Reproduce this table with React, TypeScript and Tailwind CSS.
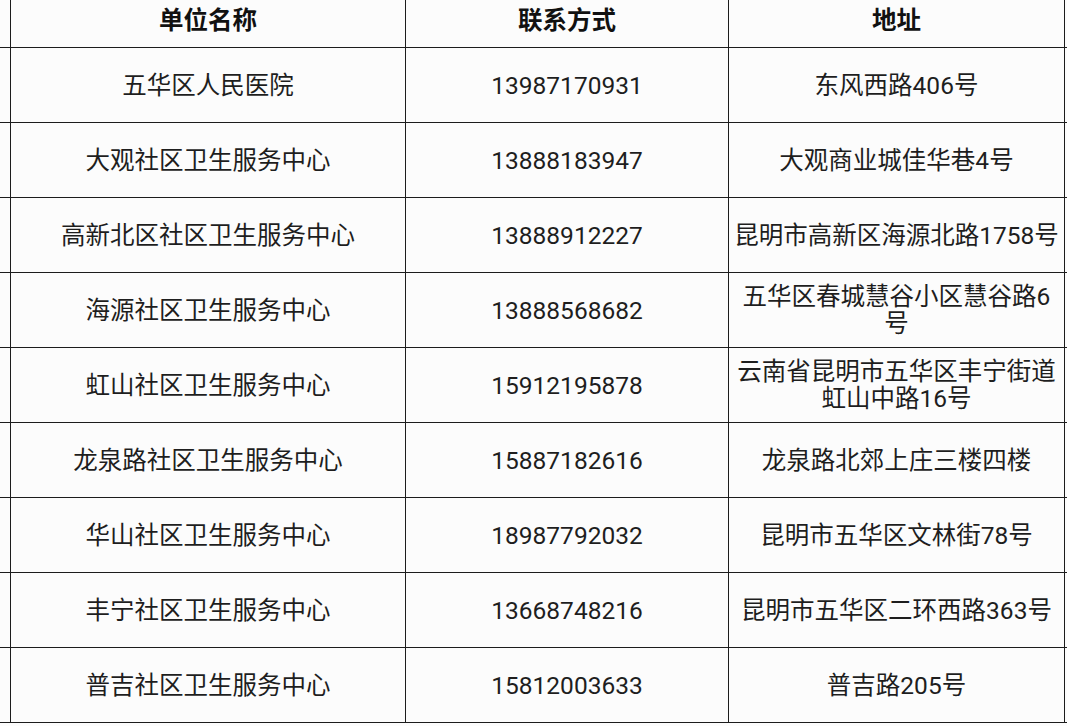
const rows = [
  { name: "五华区人民医院", phone: "13987170931", addr: "东风西路406号" },
  { name: "大观社区卫生服务中心", phone: "13888183947", addr: "大观商业城佳华巷4号" },
  { name: "高新北区社区卫生服务中心", phone: "13888912227", addr: "昆明市高新区海源北路1758号" },
  { name: "海源社区卫生服务中心", phone: "13888568682", addr: "五华区春城慧谷小区慧谷路6号" },
  { name: "虹山社区卫生服务中心", phone: "15912195878", addr: "云南省昆明市五华区丰宁街道虹山中路16号" },
  { name: "龙泉路社区卫生服务中心", phone: "15887182616", addr: "龙泉路北郊上庄三楼四楼" },
  { name: "华山社区卫生服务中心", phone: "18987792032", addr: "昆明市五华区文林街78号" },
  { name: "丰宁社区卫生服务中心", phone: "13668748216", addr: "昆明市五华区二环西路363号" },
  { name: "普吉社区卫生服务中心", phone: "15812003633", addr: "普吉路205号" },
];

const font = { fontFamily: 'Roboto, "Noto Sans CJK SC", sans-serif' };

const cell = "flex items-center justify-center text-center border-b border-[#1c1c1c]";

const App = () => {
  return (
    <div className="w-[1067px] h-[726px] overflow-hidden bg-[#fcfcfc] text-[#1e1e1e]" style={font}>
      <div className="flex h-[48px] text-[24.5px] font-bold text-[#111]">
        <div className="w-[10px] border-b border-[#1c1c1c]" />
        <div className={`${cell} w-[395px] border-l pb-[4px]`}>单位名称</div>
        <div className={`${cell} w-[323px] border-l pb-[4px]`}>联系方式</div>
        <div className={`${cell} w-[337px] border-x pb-[4px]`}>地址</div>
        <div className="w-[2px] border-b border-[#1c1c1c]" />
      </div>
      {rows.map((row, index) => (
        <div key={index} className="flex h-[75px] text-[24.5px] leading-[27px]">
          <div className="w-[10px] border-b border-[#1c1c1c]" />
          <div className={`${cell} w-[395px] border-l`}>{row.name}</div>
          <div className={`${cell} w-[323px] border-l`}>{row.phone}</div>
          <div className={`${cell} w-[337px] border-x px-[4px]`}>{row.addr}</div>
          <div className="w-[2px] border-b border-[#1c1c1c]" />
        </div>
      ))}
    </div>
  );
};

export default App;
